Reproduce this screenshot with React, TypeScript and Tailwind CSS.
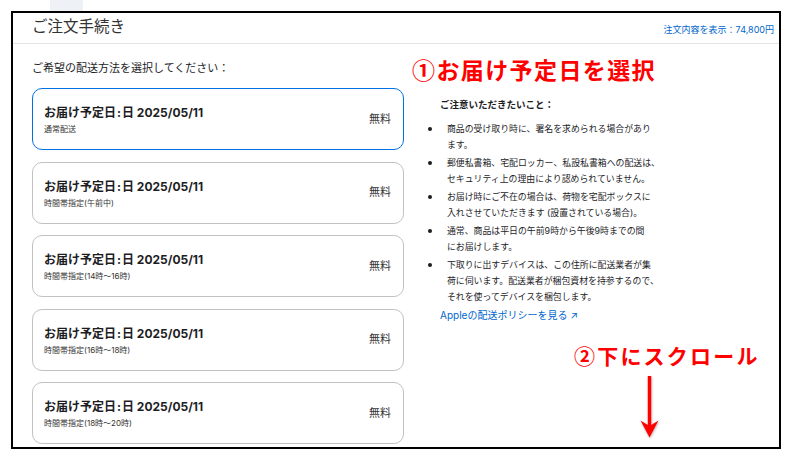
import React from "react";

const font = { fontFamily: "Inter, 'Noto Sans CJK JP', sans-serif" };

const cards = [
  { sub: "通常配送", selected: true },
  { sub: "時間帯指定(午前中)" },
  { sub: "時間帯指定(14時〜16時)" },
  { sub: "時間帯指定(16時〜18時)" },
  { sub: "時間帯指定(18時〜20時)" },
];

const notes = [
  ["商品の受け取り時に、署名を求められる場合があり", "ます。"],
  ["郵便私書箱、宅配ロッカー、私設私書箱への配送は、", "セキュリティ上の理由により認められていません。"],
  ["お届け時にご不在の場合は、荷物を宅配ボックスに", "入れさせていただきます (設置されている場合)。"],
  ["通常、商品は平日の午前9時から午後9時までの間", "にお届けします。"],
  ["下取りに出すデバイスは、この住所に配送業者が集", "荷に伺います。配送業者が梱包資材を持参するので、", "それを使ってデバイスを梱包します。"],
];

export default function App() {
  return (
    <div className="relative w-[791px] h-[463px] bg-white overflow-hidden pl-[11px] pt-[11px]" style={font}>
      <div className="absolute left-[50px] top-0 w-[33px] h-[16px] rounded-b-[4px] bg-[#eef1f5]" />
      <div className="relative w-[770px] h-[438px] border-2 border-black overflow-hidden flex flex-col bg-white">
        <div className="h-[31px] shrink-0 border-b border-[#e3e3e3] flex items-center justify-between pl-[19px] pr-[5px]">
          <div className="text-[15.5px] leading-none text-[#333] pb-[2px]">ご注文手続き</div>
          <div className="text-[9px] leading-none text-[#0066cc] pt-[2px]">注文内容を表示：74,800円</div>
        </div>
        <div className="flex pl-[19px]">
          <div className="w-[372px] shrink-0 pt-[16px]">
            <div className="text-[11px] leading-[16px] text-[#1d1d1f]">ご希望の配送方法を選択してください：</div>
            <div className="mt-[12px] flex flex-col gap-[11.5px]">
              {cards.map((c, i) => (
                <div
                  key={i}
                  className={
                    "h-[62px] rounded-[10px] flex items-center justify-between pl-[11px] pr-[12px] " +
                    (c.selected ? "border-[1.5px] border-[#0071e3]" : "border border-[#c2c2c2]")
                  }
                >
                  <div className="flex flex-col pt-[1px]">
                    <div className="text-[12px] leading-[17px] font-bold text-[#1d1d1f]">
                      お届け予定日<span className="mx-[1px]">:</span>日 2025/05/11
                    </div>
                    <div className="text-[8px] leading-[12px] mt-[2px] text-[#333]">{c.sub}</div>
                  </div>
                  <div className="text-[11px] leading-none text-[#333]">無料</div>
                </div>
              ))}
            </div>
          </div>
          <div className="ml-[36px] pt-[53px] text-[#1d1d1f]">
            <div className="text-[9.5px] leading-[16px] font-bold">ご注意いただきたいこと：</div>
            <ul className="mt-[8px] -ml-[12px]">
              {notes.map((lines, i) => (
                <li key={i} className="flex mb-[2px]">
                  <span className="w-[19px] shrink-0 flex pt-[6px]">
                    <span className="w-[3.5px] h-[3.5px] rounded-full bg-[#1d1d1f]" />
                  </span>
                  <div className="text-[8.9px] leading-[16px]">
                    {lines.map((l, j) => (
                      <div key={j}>{l}</div>
                    ))}
                  </div>
                </li>
              ))}
            </ul>
            <div className="mt-[2px] text-[10px] leading-[16px] text-[#0066cc]">Appleの配送ポリシーを見る ↗</div>
          </div>
        </div>
      </div>
      <div className="absolute left-[412px] top-[54px] text-[23px] leading-[30px] font-bold tracking-[1.4px] text-[#ff0000]" style={{ fontFamily: "'Noto Sans CJK JP', sans-serif" }}>
        ①お届け予定日を選択
      </div>
      <div className="absolute left-[574px] top-[341px] text-[21px] leading-[28px] font-bold tracking-[2.2px] text-[#ff0000]" style={{ fontFamily: "'Noto Sans CJK JP', sans-serif" }}>
        ②下にスクロール
      </div>
      <svg className="absolute left-[636px] top-[372px]" width="28" height="72" viewBox="636 372 28 72">
        <defs>
          <filter id="sh" x="-50%" y="-20%" width="200%" height="140%">
            <feDropShadow dx="0.5" dy="1" stdDeviation="0.8" floodColor="#000" floodOpacity="0.35" />
          </filter>
        </defs>
        <path d="M640.5 420.5 L649.5 437.5 L658.5 420.5 L651.2 425 L651.2 376 L647.8 376 L647.8 425 Z" fill="#ff0000" filter="url(#sh)" />
      </svg>
    </div>
  );
}
